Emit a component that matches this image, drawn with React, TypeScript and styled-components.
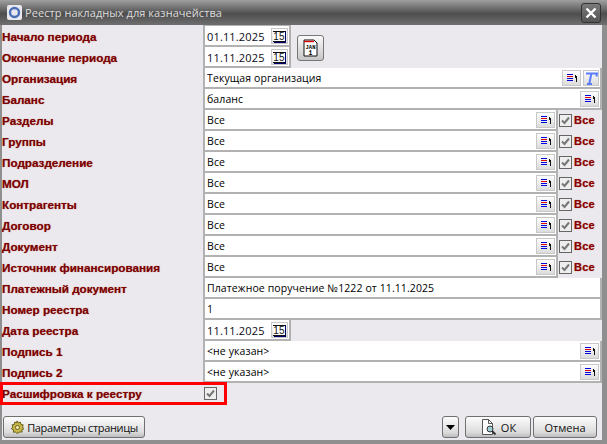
import React from "react";
import styled, { createGlobalStyle } from "styled-components";

const Global = createGlobalStyle`
  html, body { margin: 0; padding: 0; width: 607px; height: 444px; overflow: hidden; }
  * { box-sizing: border-box; }
`;
const Win = styled.div`
  width: 607px; height: 444px; display: flex; flex-direction: column;
  background: #8f8f8f; padding: 0 5px 4px 2px;
`;
const Title = styled.div`
  height: 25px; margin: 0 -5px 0 -2px; padding: 0 7px; display: flex; align-items: center; gap: 3px;
  background: linear-gradient(#a0a0a0 0, #6c6c6c 35%, #4e4e4e 55%, #6f6f6f 100%);
  color: #dcdcdc; font: 11px "Open Sans", sans-serif; letter-spacing: 0.06px;
`;
const Close = styled.div`
  position: absolute; left: 581px; top: 3px; width: 20px; height: 20px; border: 1px solid #333; border-radius: 3px;
  background: linear-gradient(#7a7a7a, #555); display: flex; align-items: center; justify-content: center;
`;
const Body = styled.div`flex: 1; background: #ebe9ed; display: flex; flex-direction: column; padding-top: 1px;`;
const Rows = styled.div`display: flex; flex-direction: column;`;
const Row = styled.div`height: 21px; display: grid; grid-template-columns: 201px 1fr; align-items: stretch;`;
const Label = styled.div`
  font: bold 11.7px "Liberation Sans", sans-serif; color: #7c0000; display: flex; align-items: center;
  text-shadow: 0 0 1px #b06060; white-space: nowrap;
`;
const Cell = styled.div`display: flex; align-items: stretch; min-width: 0;`;
const Field = styled.div<{ $w?: number }>`
  ${p => p.$w ? `width:${p.$w}px;` : "flex:1;"} background: #fff;
  border-left: 2px solid #b2b2b2; border-right: 2px solid #b2b2b2; border-bottom: 2px solid #b2b2b2;
  display: flex; align-items: center; padding: 1px 1px 0 2px; gap: 2px;
  font: 10.5px "Open Sans", sans-serif; letter-spacing: 0.1px; white-space: nowrap; color: #000;
`;
const Value = styled.span`flex: 1; overflow: hidden;`;
const DateVal = styled.span`flex: 1; font-size: 11px; letter-spacing: 0.15px; color: #0a0a20;`;
const Btn = styled.div<{ $w?: number }>`
  width: ${p => p.$w ?? 19}px; height: 16px; border: 1px solid #c8c8c8; background: linear-gradient(#fdfdfd, #dcdcdc);
  display: flex; align-items: center; justify-content: center; flex: none;
`;
const AllBox = styled.div`width: 44px; display: flex; align-items: center; gap: 2px; padding: 0 0 1px 1px; flex: none;`;
const CheckCell = styled.div`display: flex; align-items: center; padding: 0 0 1px 1px;`;
const Check = styled.div`
  width: 13px; height: 13px; border: 1px solid #666; background: #eee; display: flex; align-items: center; justify-content: center; flex: none;
`;
const AllText = styled.span`font: bold 11px "Liberation Sans", sans-serif; color: #8b0000; text-shadow: 0 0 1px #b06060; letter-spacing: 0.2px;`;
const Big = styled.div`
  width: 27px; height: 26px; margin: 9px 0 0 6px; border: 1px solid #777; border-radius: 3px;
  background: linear-gradient(#fafafa, #c6c6c6); display: flex; align-items: center; justify-content: center;
`;
const DateBlock = styled.div`display: flex; position: relative; height: 42px; margin-left: 201px;`;
const DateCol = styled.div`display: flex; flex-direction: column; box-shadow: 0 -1px #b2b2b2;`;
const DateRow = styled.div`height: 21px; display: flex;`;
const Labels = styled.div`position: absolute; left: -201px; top: 0; width: 201px; display: flex; flex-direction: column;`;
const LabelSlot = styled.div`height: 21px; display: flex;`;
const Highlight = styled.div`
  position: absolute; left: 0; top: 382px; width: 227px; height: 23px; border: 3px solid #f00; pointer-events: none;
`;
const Footer = styled.div`flex: 1; display: flex; align-items: flex-start; padding: 12px 5px 0 1px; gap: 2px;`;
const FootBtn = styled.button<{ $w: number; $track?: number }>`
  width: ${p => p.$w}px; height: 22px; padding: 0; border: 1px solid #707070; border-radius: 3px;
  background: linear-gradient(#fcfcfc, #dcdcdc 75%, #bdbdbd); display: flex; align-items: center; justify-content: center; gap: 3px;
  font: 11px "Open Sans", sans-serif; letter-spacing: ${p => p.$track ?? 0}px; color: #111; flex: none; white-space: nowrap;
`;
const Spacer = styled.div`flex: 1;`;
const ArrowGap = styled.div`width: 2px; flex: none;`;

const ListIcon = () => (
  <svg width="12" height="10" viewBox="0 0 12 10" shapeRendering="crispEdges">
    <path d="M1 1.500h6" stroke="#0000d8" /><path d="M1 3.500h6" stroke="#e00000" /><path d="M1 5.500h6" stroke="#0000d8" /><path d="M1 7.500h6" stroke="#0000d8" />
    <path d="M10.500 9V3.500H9M9.500 2v3" stroke="#111" fill="none" />
  </svg>
);
const CalIcon = () => (
  <svg width="13" height="13" viewBox="0 0 13 13" shapeRendering="crispEdges">
    <rect x="0" y="0" width="12" height="12" fill="#fff" />
    <path d="M0 1.500h12M0 11.500h12" stroke="#111" />
    <path d="M12.500 1v12M1 12.500h12" stroke="#00006a" />
    <text x="6" y="10" fontSize="10" textAnchor="middle" fontFamily="Liberation Sans" fill="#111">15</text>
  </svg>
);
const Tick = () => (
  <svg width="11" height="11" viewBox="0 0 11 11"><path d="M2 5.500l2.500 2.500L9 2.500" stroke="#777" strokeWidth="2" fill="none" /></svg>
);
const TIcon = () => (
  <svg width="14" height="13" viewBox="0 0 14 13"><path d="M2 1.500h11l-.6 3M7.500 1L5.200 12M3 12h5" stroke="#5a7cff" strokeWidth="2" fill="none" /></svg>
);
const AppIcon = () => (
  <svg width="15" height="15" viewBox="0 0 15 15">
    <rect width="15" height="15" rx="2" fill="#e8e8ee" /><circle cx="7.500" cy="7.500" r="4.500" fill="none" stroke="#4a6fb5" strokeWidth="2.400" />
  </svg>
);
const X = () => (
  <svg width="12" height="12" viewBox="0 0 12 12"><path d="M1.500 1.500l9 9M10.500 1.500l-9 9" stroke="#fff" strokeWidth="2.400" /></svg>
);
const JanIcon = () => (
  <svg width="15" height="18" viewBox="0 0 15 18">
    <path d="M1 1h10l3 3v13H1z" fill="#fff" stroke="#111" /><path d="M1 2.500h10" stroke="#e00000" strokeWidth="1.400" />
    <text x="7.500" y="9.500" fontSize="5.500" fontWeight="bold" textAnchor="middle" fontFamily="Liberation Mono">JAN</text>
    <text x="7.500" y="15.500" fontSize="6.500" fontWeight="bold" textAnchor="middle" fontFamily="Liberation Mono">1</text>
  </svg>
);
const Gear = () => (
  <svg width="14" height="14" viewBox="0 0 16 16">
    <path d="M8 1l1.400 2.200L12 2.400l.4 2.700 2.700.4-.8 2.500L16 10l-2.400 1.100.3 2.700-2.700-.1L8 15.500 6.500 13.700l-2.600.3.200-2.700L1.500 10l1.700-2-.9-2.500 2.700-.5.400-2.600 2.500.8z" fill="#c8b84a" stroke="#5c5410" strokeWidth="1" />
    <circle cx="8.500" cy="8.500" r="2.300" fill="#f4eeb4" stroke="#5c5410" />
  </svg>
);
const Doc = () => (
  <svg width="18" height="18" viewBox="0 0 18 18">
    <path d="M2.500 1.500h6l4 4v11h-10z" fill="#fff" stroke="#555" /><path d="M8.500 1.500v4h4" fill="none" stroke="#555" />
    <circle cx="10" cy="11" r="3" fill="#9fd0d8" stroke="#333" /><path d="M12 13l3.500 3.500" stroke="#333" strokeWidth="2" />
  </svg>
);
const Caret = () => <svg width="9" height="5" viewBox="0 0 9 5"><path d="M0 0h9L4.500 5z" fill="#000" /></svg>;

const multi = ["Разделы", "Группы", "Подразделение", "МОЛ", "Контрагенты", "Договор", "Документ", "Источник финансирования"];

const TextRow = ({ label, value, icon = true, extra }: { label: string; value: string; icon?: boolean; extra?: boolean }) => (
  <Row>
    <Label>{label}</Label>
    <Cell>
      <Field><Value>{value}</Value>{icon && <Btn><ListIcon /></Btn>}{extra && <Btn $w={16}><TIcon /></Btn>}</Field>
    </Cell>
  </Row>
);

export default function App() {
  return (
    <Win>
      <Global />
      <Title><AppIcon />Реестр накладных для казначейства</Title>
      <Close><X /></Close>
      <Body>
        <Rows>
          <DateBlock>
            <Labels>
              <LabelSlot><Label>Начало периода</Label></LabelSlot>
              <LabelSlot><Label>Окончание периода</Label></LabelSlot>
            </Labels>
            <DateCol>
              <DateRow><Field $w={88}><DateVal>01.11.2025</DateVal><Btn $w={17}><CalIcon /></Btn></Field></DateRow>
              <DateRow><Field $w={88}><DateVal>11.11.2025</DateVal><Btn $w={17}><CalIcon /></Btn></Field></DateRow>
            </DateCol>
            <Big><JanIcon /></Big>
          </DateBlock>
          <TextRow label="Организация" value="Текущая организация" extra />
          <TextRow label="Баланс" value="баланс" />
          {multi.map(m => (
            <Row key={m}>
              <Label>{m}</Label>
              <Cell>
                <Field><Value>Все</Value><Btn><ListIcon /></Btn></Field>
                <AllBox><Check><Tick /></Check><AllText>Все</AllText></AllBox>
              </Cell>
            </Row>
          ))}
          <TextRow label="Платежный документ" value="Платежное поручение №1222 от 11.11.2025" icon={false} />
          <TextRow label="Номер реестра" value="1" icon={false} />
          <Row>
            <Label>Дата реестра</Label>
            <Cell><Field $w={88}><DateVal>11.11.2025</DateVal><Btn $w={17}><CalIcon /></Btn></Field></Cell>
          </Row>
          <TextRow label="Подпись 1" value="<не указан>" />
          <TextRow label="Подпись 2" value="<не указан>" />
          <Row>
            <Label>Расшифровка к реестру</Label>
            <CheckCell><Check><Tick /></Check></CheckCell>
          </Row>
        </Rows>
        <Footer>
          <FootBtn $w={142} $track={-0.35}><Gear />Параметры страницы</FootBtn>
          <Spacer />
          <FootBtn $w={17}><Caret /></FootBtn>
          <ArrowGap />
          <FootBtn $w={66}><Doc />ОК</FootBtn>
          <FootBtn $w={64}>Отмена</FootBtn>
        </Footer>
      </Body>
      <Highlight />
    </Win>
  );
}
